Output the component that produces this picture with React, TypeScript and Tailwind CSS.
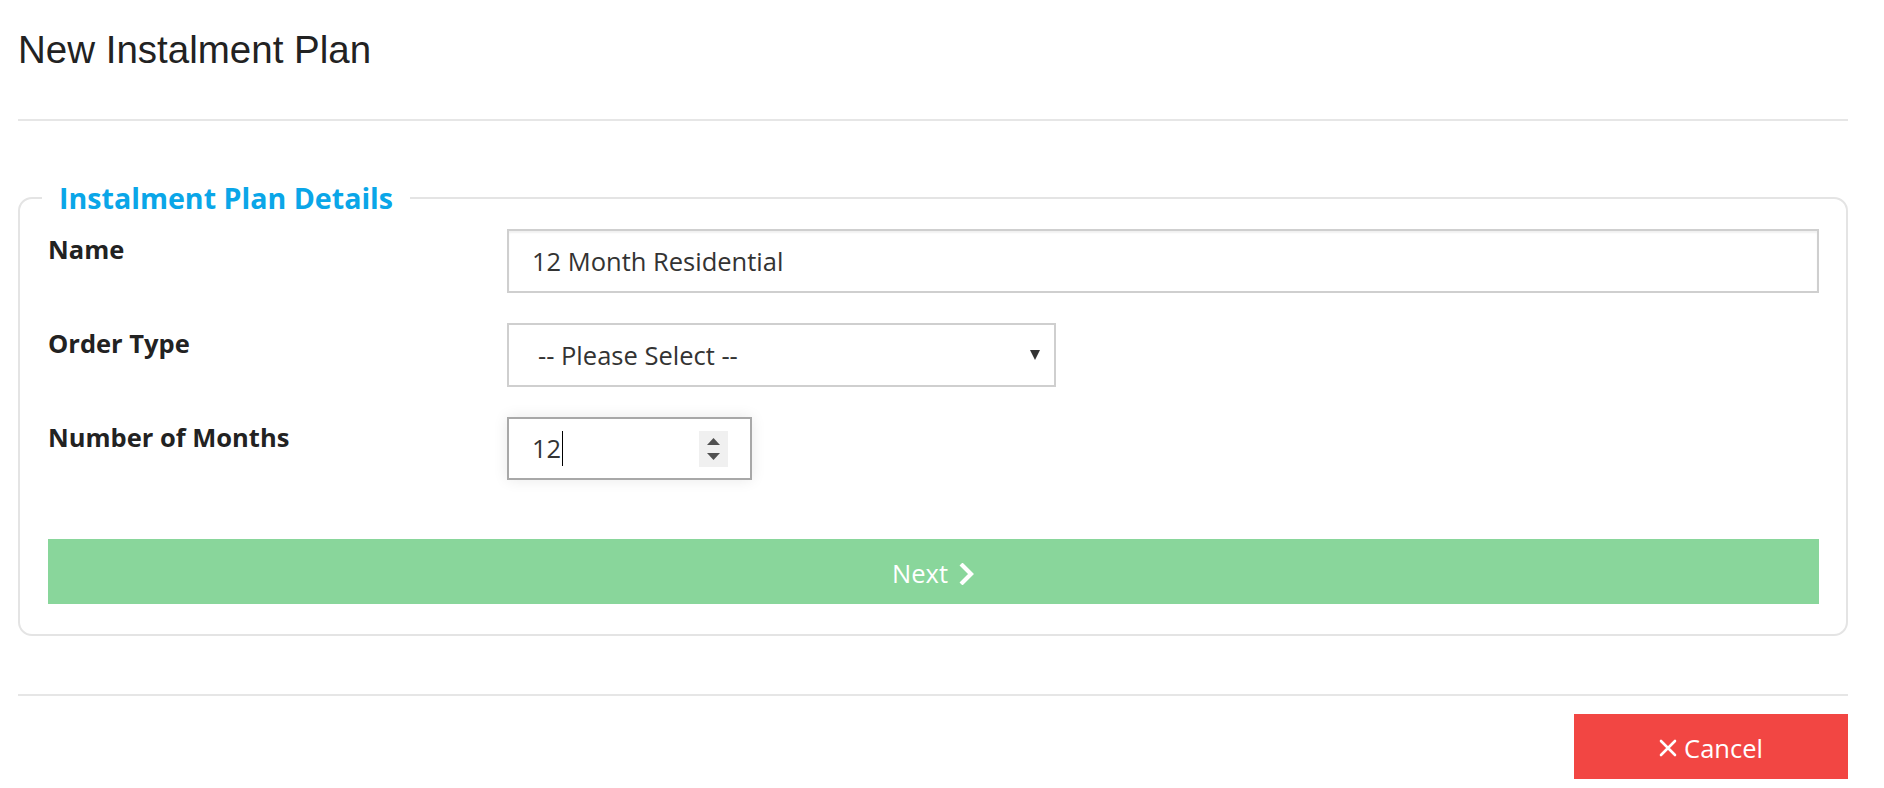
import React from 'react';

const ChevronRight: React.FC = () => (
  <svg width="16" height="22" viewBox="0 0 16 22" className="ml-[11px]">
    <path d="M3.5 2.5 L12 11 L3.5 19.5" fill="none" stroke="#fff" strokeWidth="4.2" strokeLinecap="square" />
  </svg>
);

const CloseIcon: React.FC = () => (
  <svg width="18" height="18" viewBox="0 0 18 18" className="mr-[7px]">
    <path d="M2 2 L16 16 M16 2 L2 16" stroke="#fff" strokeWidth="2.6" strokeLinecap="round" />
  </svg>
);

const FieldLabel: React.FC<{ children: React.ReactNode }> = ({ children }) => (
  <div className="pt-[3px] text-[25.5px] leading-[34px] font-bold text-[#222]">{children}</div>
);

const App: React.FC = () => {
  return (
    <div className="min-h-[788px] bg-white pl-[18px] pr-[36px] font-['Open_Sans',sans-serif] text-[#333]">
      {/* Header */}
      <h1 className="pt-[29px] font-['Liberation_Sans',Arial,sans-serif] text-[38.5px] leading-[42px] text-[#222]">
        New Instalment Plan
      </h1>
      <div className="mt-[48px] h-[2px] bg-[#e6e6e6]" />

      {/* Details */}
      <fieldset className="mt-[59px] rounded-[14px] border-2 border-[#e4e4e4] pl-[28px] pr-[27px] pb-[30px]">
        <legend className="ml-[-6px] px-[17px] text-[28.6px] leading-[36px] font-bold text-[#0aa6e8]">
          Instalment Plan Details
        </legend>

        <div className="mt-[13px] grid grid-cols-[459px_1fr] gap-y-[30px]">
          <FieldLabel>Name</FieldLabel>
          <div className="flex h-[64px] items-center border-2 border-[#cfcfcf] pl-[23px] text-[25.5px] text-[#333] shadow-[inset_0_2px_2px_rgba(0,0,0,0.06)]">
            12 Month Residential
          </div>

          <FieldLabel>Order Type</FieldLabel>
          <div className="flex h-[64px] w-[549px] items-center justify-between border-2 border-[#cfcfcf] pl-[29px] pr-[14px] text-[25.5px] text-[#333]">
            <span>-- Please Select --</span>
            <svg width="10" height="10" viewBox="0 0 10 10">
              <path d="M0 0 L10 0 L5 10 Z" fill="#333" />
            </svg>
          </div>

          <FieldLabel>Number of Months</FieldLabel>
          <div className="flex h-[63px] w-[245px] items-center justify-between border-2 border-[#a8a8a8] pl-[23px] pr-[22px] text-[25.5px] text-[#333] shadow-[0_0_14px_rgba(0,0,0,0.09)]">
            <span className="flex items-center">
              12
              <span className="ml-[1px] h-[35px] w-px bg-black" />
            </span>
            <div className="flex h-[36px] w-[29px] flex-col items-center justify-center gap-[8px] bg-[#f0f0f0]">
              <svg width="13" height="7" viewBox="0 0 13 7">
                <path d="M6.5 0 L13 7 L0 7 Z" fill="#505050" />
              </svg>
              <svg width="13" height="7" viewBox="0 0 13 7">
                <path d="M0 0 L13 0 L6.5 7 Z" fill="#505050" />
              </svg>
            </div>
          </div>
        </div>

        <button className="mt-[59px] flex h-[65px] w-full items-center justify-center bg-[#89d69b] pt-[4px] text-[25.5px] text-white">
          Next
          <ChevronRight />
        </button>
      </fieldset>

      <div className="mt-[58px] h-[2px] bg-[#e6e6e6]" />

      {/* Footer */}
      <div className="mt-[18px] flex justify-end">
        <button className="flex h-[65px] w-[274px] items-center justify-center bg-[#f24643] pt-[3px] text-[25.5px] text-white">
          <CloseIcon />
          Cancel
        </button>
      </div>
    </div>
  );
};

export default App;
